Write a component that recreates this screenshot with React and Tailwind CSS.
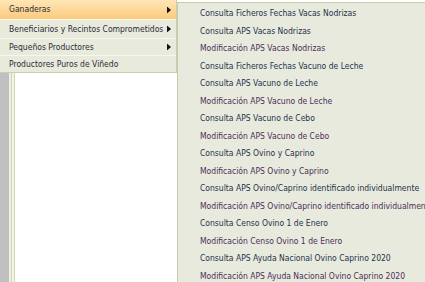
import React from "react";

const subItems = [
  "Consulta Ficheros Fechas Vacas Nodrizas",
  "Consulta APS Vacas Nodrizas",
  "Modificación APS Vacas Nodrizas",
  "Consulta Ficheros Fechas Vacuno de Leche",
  "Consulta APS Vacuno de Leche",
  "Modificación APS Vacuno de Leche",
  "Consulta APS Vacuno de Cebo",
  "Modificación APS Vacuno de Cebo",
  "Consulta APS Ovino y Caprino",
  "Modificación APS Ovino y Caprino",
  "Consulta APS Ovino/Caprino identificado individualmente",
  "Modificación APS Ovino/Caprino identificado individualmente",
  "Consulta Censo Ovino 1 de Enero",
  "Modificación Censo Ovino 1 de Enero",
  "Consulta APS Ayuda Nacional Ovino Caprino 2020",
  "Modificación APS Ayuda Nacional Ovino Caprino 2020",
];

function Arrow() {
  return (
    <svg width="4" height="7" viewBox="0 0 4 7" className="absolute right-[5px] top-1/2 -translate-y-1/2">
      <path d="M0 0 L4 3.5 L0 7 Z" fill="#111" />
    </svg>
  );
}

export default function App() {
  const font = { fontFamily: '"DejaVu Sans Condensed", "DejaVu Sans", sans-serif' };
  return (
    <div className="relative w-[425px] h-[282px] overflow-hidden bg-white" style={font}>
      {/* page behind */}
      <div className="flex h-full">
        <div className="w-[9px] bg-[#c0c0c0]" />
        <div className="w-[2px] bg-[#eef0e4]" />
        <div className="w-[1px] bg-[#cfd8b0]" />
        <div className="w-[2px] bg-[#f2f4ea]" />
        <div className="w-[1px] bg-[#cfd8b0]" />
        <div className="flex-1 bg-white" />
      </div>

      {/* main menu */}
      <div className="absolute left-0 top-0 w-[177px] bg-[#e8ebdc] border-r border-b border-[#c9cfb4] text-[8.5px] text-[#2a2a3a] whitespace-nowrap">
        <div className="relative h-[19px] flex items-center pl-[9px] bg-gradient-to-b from-[#fee6b6] to-[#fcca7a]">
          Ganaderas
          <Arrow />
        </div>
        <div className="relative h-[19px] flex items-center pl-[9px] border-t border-[#f6f7f0]">
          Beneficiarios y Recintos Comprometidos
          <Arrow />
        </div>
        <div className="relative h-[17px] flex items-center pl-[9px] border-t border-[#f6f7f0]">
          Pequeños Productores
          <Arrow />
        </div>
        <div className="relative h-[17px] flex items-center pl-[9px] border-t border-[#f6f7f0]">
          Productores Puros de Viñedo
        </div>
      </div>

      {/* submenu */}
      <div className="absolute left-[177px] top-[2px] w-[260px] bg-[#e8eadd] border-l border-t border-[#c5cda6] pt-[2px] text-[8.5px]">
        {subItems.map((t) => (
          <div
            key={t}
            className={
              "h-[17.5px] flex items-center pl-[22px] whitespace-nowrap " +
              (t.startsWith("Modificación") ? "text-[#4a2f58]" : "text-[#25324a]")
            }
          >
            {t}
          </div>
        ))}
      </div>
    </div>
  );
}
